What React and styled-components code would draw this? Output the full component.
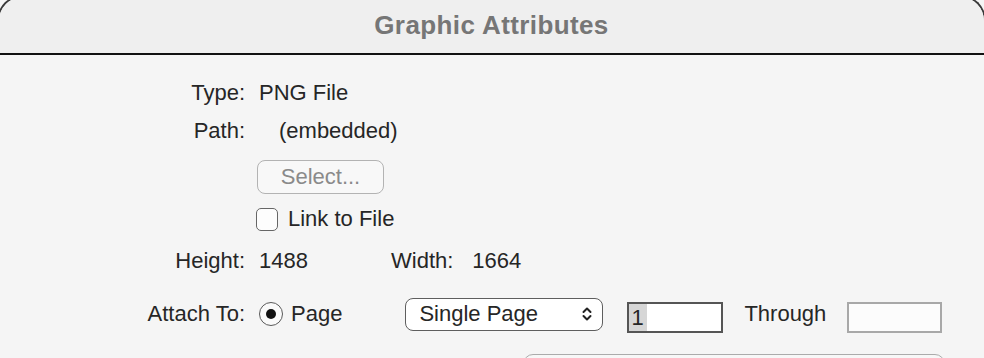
import React from 'react';
import styled, { createGlobalStyle } from 'styled-components';

const Global = createGlobalStyle`
  *, *::before, *::after { box-sizing: border-box; }
  html, body { margin: 0; padding: 0; background: #f5f5f5; overflow: hidden; }
  #root { width: 984px; height: 358px; overflow: hidden; }
`;

const Window = styled.div`
  margin: -5px -2px 0 -3px;
  height: 380px;
  border: 2px solid #3a3a3a;
  border-bottom: none;
  border-radius: 26px 26px 0 0;
  background: #f5f5f5;
  overflow: hidden;
  font-family: "Liberation Sans", Arial, sans-serif;
  font-size: 22px;
  color: #262626;
`;

const TitleBar = styled.header`
  height: 58px;
  background: #efefef;
  border-bottom: 2px solid #111;
  display: flex;
  align-items: center;
  justify-content: center;
`;

const Title = styled.h1`
  margin: 0;
  font: bold 26px/26px "Liberation Sans", Arial, sans-serif;
  letter-spacing: 0.4px;
  color: #767676;
`;

const Content = styled.div`
  padding-top: 19px;
`;

const Row = styled.div`
  display: grid;
  grid-template-columns: 246px auto;
  column-gap: 14px;
  align-items: center;
  height: ${(p) => p.$h}px;
  margin-top: ${(p) => p.$mt || 0}px;
`;

const Label = styled.span`
  text-align: right;
  white-space: nowrap;
`;

const Value = styled.div`
  display: flex;
  align-items: center;
  white-space: nowrap;
`;

const Text = styled.span`
  margin-left: ${(p) => p.$ml || 0}px;
  min-width: ${(p) => p.$w || 0}px;
`;

const PushButton = styled.button`
  margin-left: -2px;
  width: 127px;
  height: 34px;
  border: 1.5px solid #b3b3b3;
  border-radius: 8px;
  background: #f8f8f8;
  font: 22px "Liberation Sans", Arial, sans-serif;
  color: #8a8a8a;
  padding: 0;
`;

const CheckBox = styled.span`
  margin-left: -3px;
  width: 22px;
  height: 23px;
  border: 1.5px solid #666;
  border-radius: 5px;
  background: #fdfdfd;
`;

const Radio = styled.span`
  width: 24px;
  height: 24px;
  border: 1.5px solid #5a5a5a;
  border-radius: 50%;
  background: #fafafa;
  display: flex;
  align-items: center;
  justify-content: center;
  &::after {
    content: "";
    width: 10px;
    height: 10px;
    border-radius: 50%;
    background: #111;
  }
`;

const Dropdown = styled.div`
  margin-left: 63px;
  width: 198px;
  height: 33px;
  border: 1.5px solid #5e5e5e;
  border-radius: 8px;
  background: #fff;
  display: flex;
  align-items: center;
  justify-content: space-between;
  padding: 0 10px 0 13px;
`;

const Field = styled.div`
  margin-left: ${(p) => p.$ml}px;
  margin-top: 7px;
  width: ${(p) => p.$w}px;
  height: 31px;
  border: 2px solid ${(p) => (p.$disabled ? '#a8a8a8' : '#555')};
  background: ${(p) => (p.$disabled ? '#fcfcfc' : '#fff')};
  display: flex;
  align-items: stretch;
`;

const Selection = styled.span`
  background: #d6d6d6;
  padding: 0 3px 0 2px;
  line-height: 27px;
`;

const BottomBox = styled.div`
  margin: 16px 0 0 524px;
  width: 422px;
  height: 40px;
  border: 1.5px solid #ababab;
  border-radius: 10px;
  background: #f7f7f7;
`;

const Chevrons = () => (
  <svg width="10" height="16" viewBox="0 0 10 16" fill="none" stroke="#222" strokeWidth="2" strokeLinecap="round" strokeLinejoin="round">
    <path d="M1.5 6 L5 2.5 L8.5 6" />
    <path d="M1.5 10 L5 13.5 L8.5 10" />
  </svg>
);

export default function App() {
  return (
    <>
      <Global />
      <Window>
        <TitleBar>
          <Title>Graphic Attributes</Title>
        </TitleBar>
        <Content>
          <Row $h={38}>
            <Label>Type:</Label>
            <Value>PNG File</Value>
          </Row>
          <Row $h={38}>
            <Label>Path:</Label>
            <Value>
              <Text $ml={20}>(embedded)</Text>
            </Value>
          </Row>
          <Row $h={34} $mt={10}>
            <span />
            <Value>
              <PushButton>Select...</PushButton>
            </Value>
          </Row>
          <Row $h={30} $mt={10}>
            <span />
            <Value>
              <CheckBox />
              <Text $ml={10}>Link to File</Text>
            </Value>
          </Row>
          <Row $h={38} $mt={8}>
            <Label>Height:</Label>
            <Value>
              <Text $w={132}>1488</Text>
              <Text>Width:</Text>
              <Text $ml={19}>1664</Text>
            </Value>
          </Row>
          <Row $h={48} $mt={10}>
            <Label>Attach To:</Label>
            <Value>
              <Radio />
              <Text $ml={8}>Page</Text>
              <Dropdown>
                <span>Single Page</span>
                <Chevrons />
              </Dropdown>
              <Field $ml={24} $w={96}>
                <Selection>1</Selection>
              </Field>
              <Text $ml={21}>Through</Text>
              <Field $ml={21} $w={95} $disabled />
            </Value>
          </Row>
          <BottomBox />
        </Content>
      </Window>
    </>
  );
}
